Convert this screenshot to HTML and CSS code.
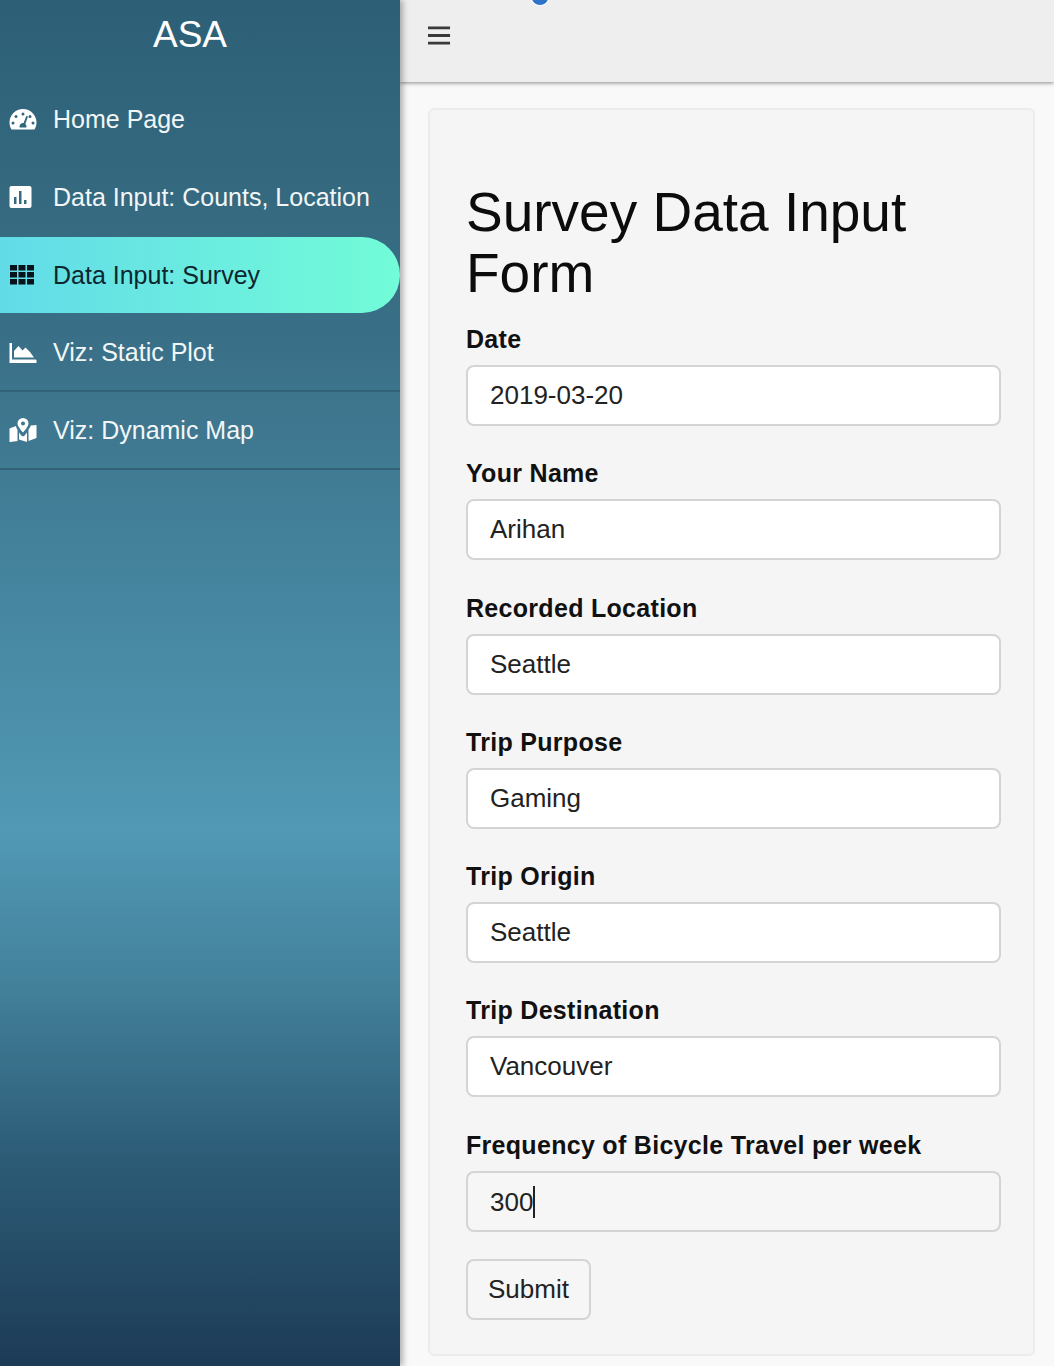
FILE: index.html
```html
<!DOCTYPE html>
<html lang="en">
<head>
<meta charset="utf-8">
<title>Survey Data Input Form</title>
<link rel="stylesheet" href="styles.css">
</head>
<body>
<div class="app">
  <aside class="sidebar">
    <div class="brand">ASA</div>
    <nav class="menu">
      <a class="item">
        <svg class="icon" viewBox="0 0 28 24"><path fill="#fff" fill-rule="evenodd" d="M14 2C6.5 2 .5 8 .5 15.5c0 2.4.6 4.6 1.700 6.500.3.400.7.600 1.200.600h21.200c.5 0 .9-.2 1.200-.6 1.100-1.900 1.700-4.100 1.700-6.500C27.500 8 21.500 2 14 2zm0 3.500a1.500 1.500 0 1 1 0 3 1.500 1.500 0 0 1 0-3zM7 8a1.500 1.500 0 1 1 0 3 1.500 1.500 0 0 1 0-3zm-3 6.500a1.500 1.500 0 1 1 0 3 1.500 1.500 0 0 1 0-3zm20 0a1.500 1.500 0 1 1 0 3 1.500 1.500 0 0 1 0-3zM21 8a1.500 1.500 0 1 1 0 3 1.500 1.500 0 0 1 0-3zm-2 1.500-2.700 7.600c.8.600 1.200 1.500 1.200 2.400 0 .4-.1.700-.2 1h-6.600c-.1-.3-.2-.6-.2-1 0-1.900 1.600-3.500 3.500-3.500h.6L17.300 9z"/></svg>
        <span>Home Page</span>
      </a>
      <a class="item">
        <svg class="icon" viewBox="0 0 28 24"><path fill="#fff" fill-rule="evenodd" d="M2.500 1h18c1.100 0 2 .9 2 2v18c0 1.100-.9 2-2 2h-18c-1.100 0-2-.9-2-2V3c0-1.100.9-2 2-2zM5 12v7h2.500v-7zm5-6v13h2.500V6zm5 9v4h2.500v-4z"/></svg>
        <span>Data Input: Counts, Location</span>
      </a>
      <a class="item active">
        <svg class="icon" viewBox="0 0 28 24"><path fill="#06131a" d="M1 2h7v5.500H1zm8.500 0h7v5.500h-7zM18 2h7v5.500h-7zM1 9h7v5.500H1zm8.500 0h7v5.500h-7zM18 9h7v5.500h-7zM1 16h7v5.500H1zm8.500 0h7v5.500h-7zM18 16h7v5.500h-7z"/></svg>
        <span>Data Input: Survey</span>
      </a>
      <a class="item">
        <svg class="icon" viewBox="0 0 28 24"><path fill="#fff" d="M.5 3h2.500v16.500h23.500a1 1 0 0 1 1 1V23H.5zM5 17.500V11l4.500-5 4 4.500 3-3 4.500 4.500 4 5.500z"/></svg>
        <span>Viz: Static Plot</span>
      </a>
      <a class="item">
        <svg class="icon" viewBox="0 0 28 24"><path fill="#fff" fill-rule="evenodd" d="M14 0a5.500 5.500 0 0 1 5.500 5.500c0 2.500-3.500 6.800-5 8.600a.7.7 0 0 1-1 0c-1.500-1.800-5-6.100-5-8.600A5.500 5.500 0 0 1 14 0zm0 3.500a2 2 0 1 0 0 4 2 2 0 0 0 0-4zM.5 10.500l6.500-2.500c.2 1.200.9 2.700 1.500 3.800V23L1.300 24c-.4.100-.8-.1-.8-.6zM10 14.500c1 1.400 1.900 2.500 2.600 3.200.8.800 2 .8 2.800 0 .7-.7 1.600-1.800 2.600-3.200V24l-8-2.500zM27.500 7v13l-8 3V11.800c1.100-1.700 2-3.200 2.200-4.300z"/></svg>
        <span>Viz: Dynamic Map</span>
      </a>
    </nav>
  </aside>
  <div class="content">
    <header class="topbar">
      <span class="dot"></span>
      <svg class="burger" viewBox="0 0 24 20"><path d="M0 1h23v3H0zM0 9h23v3H0zM0 17h23v3H0z" fill="#3a3a3a"/></svg>
    </header>
    <main class="main">
      <section class="panel">
        <h1 class="title">Survey Data Input Form</h1>
        <form class="form">
          <div class="group"><label class="label">Date</label><input class="field" value="2019-03-20"></div>
          <div class="group"><label class="label">Your Name</label><input class="field" value="Arihan"></div>
          <div class="group"><label class="label">Recorded Location</label><input class="field" value="Seattle"></div>
          <div class="group"><label class="label">Trip Purpose</label><input class="field" value="Gaming"></div>
          <div class="group"><label class="label">Trip Origin</label><input class="field" value="Seattle"></div>
          <div class="group"><label class="label">Trip Destination</label><input class="field" value="Vancouver"></div>
          <div class="group"><label class="label">Frequency of Bicycle Travel per week</label><div class="field focus">300<span class="caret"></span></div></div>
          <button type="button" class="submit">Submit</button>
        </form>
      </section>
    </main>
  </div>
</div>
</body>
</html>
```
FILE: styles.css
```css
* { box-sizing: border-box; }
html, body { margin: 0; height: 100%; }
body {
  width: 1054px;
  height: 1366px;
  overflow: hidden;
  font-family: "Liberation Sans", Arial, sans-serif;
  color: #111;
  background: #f9f9f9;
}
.app { display: flex; height: 1366px; }
.sidebar {
  width: 400px;
  flex: none;
  position: relative;
  z-index: 2;
  background: linear-gradient(180deg, #2d6076 0%, #3a7087 25%, #5199b5 61%, #43819b 72%, #2c5b76 85%, #1d3b56 100%);
  box-shadow: 3px 0 6px rgba(0,0,0,.3);
}
.brand {
  height: 80px;
  padding-top: 12px;
  padding-right: 20px;
  text-align: center;
  font-size: 37px;
  line-height: 46px;
  color: #fff;
}
.menu { display: flex; flex-direction: column; }
.item {
  display: flex;
  align-items: center;
  height: 78px;
  padding-left: 9px;
  gap: 16px;
  font-size: 25px;
  color: #f2f6f7;
}
.item:nth-child(4), .item:nth-child(5) { border-bottom: 2px solid #336177; }
.item.active {
  margin: 1px 0;
  height: 76px;
  background: linear-gradient(90deg, #62dbe8 0%, #72fcd8 100%);
  border-radius: 0 38px 38px 0;
  color: #0e2630;
}
.icon { width: 28px; height: 24px; flex: none; }
.content { flex: 1; min-width: 0; display: flex; flex-direction: column; }
.topbar {
  height: 82px;
  flex: none;
  position: relative;
  display: flex;
  align-items: center;
  padding: 0 0 12px 28px;
  background: #eeeeee;
  box-shadow: 0 1px 4px rgba(0,0,0,.45);
}
.dot {
  position: absolute;
  left: 131px;
  top: -10px;
  width: 18px;
  height: 16px;
  border-radius: 50%;
  background: #2f73c9;
  border: 1px solid #fff;
}
.burger { width: 23px; height: 20px; }
.main { flex: 1; padding: 26px 19px 0 28px; }
.panel {
  height: 1248px;
  padding: 72px 36px 0;
  background: #f5f5f5;
  border: 2px solid #ececec;
  border-radius: 6px;
}
.title {
  margin: 0 0 20px;
  font-size: 55px;
  font-weight: 400;
  line-height: 61px;
  color: #0c0c0c;
}
.form { display: flex; flex-direction: column; }
.group { height: 134.3px; }
.label {
  display: block;
  height: 41px;
  font-size: 25px;
  line-height: 30px;
  font-weight: 700;
  letter-spacing: .3px;
}
.field {
  display: block;
  width: 535px;
  height: 61px;
  padding: 0 22px;
  font: 400 26px/59px "Liberation Sans", Arial, sans-serif;
  color: #222;
  background: #fff;
  border: 2px solid #d4d4d4;
  border-radius: 8px;
  outline: none;
}
.field.focus { background: #f6f6f6; }
.caret {
  display: inline-block;
  width: 2px;
  height: 32px;
  margin-left: 0;
  vertical-align: -7px;
  background: #222;
}
.submit {
  align-self: flex-start;
  width: 125px;
  height: 61px;
  margin-top: -5px;
  padding: 0;
  font: 400 26px "Liberation Sans", Arial, sans-serif;
  color: #222;
  background: #f6f6f6;
  border: 2px solid #d4d4d4;
  border-radius: 8px;
}
```
